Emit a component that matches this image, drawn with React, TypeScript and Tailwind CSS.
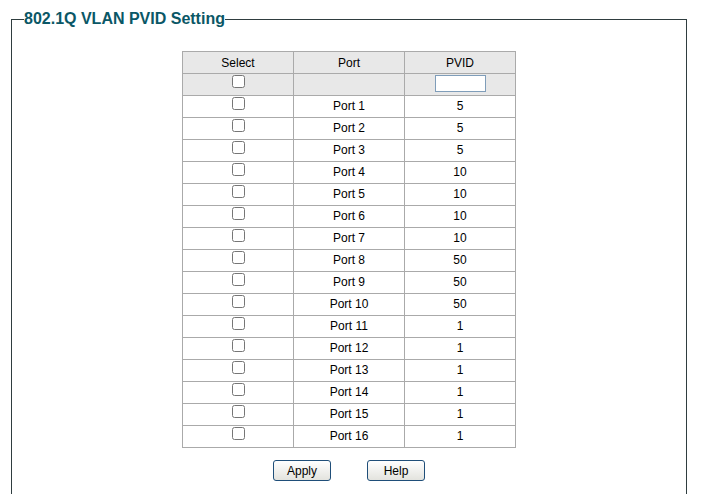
import React from "react";

const ports = [
  { name: "Port 1", pvid: 5 },
  { name: "Port 2", pvid: 5 },
  { name: "Port 3", pvid: 5 },
  { name: "Port 4", pvid: 10 },
  { name: "Port 5", pvid: 10 },
  { name: "Port 6", pvid: 10 },
  { name: "Port 7", pvid: 10 },
  { name: "Port 8", pvid: 50 },
  { name: "Port 9", pvid: 50 },
  { name: "Port 10", pvid: 50 },
  { name: "Port 11", pvid: 1 },
  { name: "Port 12", pvid: 1 },
  { name: "Port 13", pvid: 1 },
  { name: "Port 14", pvid: 1 },
  { name: "Port 15", pvid: 1 },
  { name: "Port 16", pvid: 1 },
];

const Check = () => (
  <input type="checkbox" className="m-0 mt-[1px] h-[13px] w-[13px] align-top" />
);

export default function App() {
  return (
    <div className="h-[494px] w-[712px] overflow-hidden bg-white font-['Liberation_Sans',Arial,sans-serif] text-[12px] text-black">
      <fieldset className="ml-[11px] mt-[10px] h-[600px] w-[676px] border border-[#2f3d3f] px-3 pt-0">
        <legend className="px-0 text-[16px] font-bold leading-[18px] text-[#0a5766]">
          802.1Q VLAN PVID Setting
        </legend>
        <table className="mx-auto mt-[23px] w-[334px] table-fixed border-collapse">
          <thead>
            <tr className="h-[22px] bg-[#e8e8e8]">
              <th className="w-[111px] border border-[#aaaaaa] p-0 font-normal">Select</th>
              <th className="w-[111px] border border-[#aaaaaa] p-0 font-normal">Port</th>
              <th className="w-[111px] border border-[#aaaaaa] p-0 font-normal">PVID</th>
            </tr>
            <tr className="h-[22px] bg-[#e8e8e8]">
              <td className="h-[22px] border border-[#aaaaaa] p-0 text-center align-top">
                <Check />
              </td>
              <td className="border border-[#aaaaaa] p-0" />
              <td className="border border-[#aaaaaa] p-0 text-center align-top">
                <input
                  type="text"
                  className="mt-[1px] h-[17px] w-[51px] border border-[#7f9db9] bg-white px-1 align-top outline-none"
                />
              </td>
            </tr>
          </thead>
          <tbody>
            {ports.map((p) => (
              <tr key={p.name} className="h-[22px]">
                <td className="h-[22px] border border-[#aaaaaa] p-0 text-center align-top">
                  <Check />
                </td>
                <td className="border border-[#aaaaaa] p-0 pb-[1px] text-center">{p.name}</td>
                <td className="border border-[#aaaaaa] p-0 pb-[1px] text-center">{p.pvid}</td>
              </tr>
            ))}
          </tbody>
        </table>
        <div className="mt-[12px] flex justify-center gap-[36px]">
          <button className="h-[21px] w-[58px] rounded-[3px] border border-[#1f4e79] bg-gradient-to-b from-white to-[#e3e3de] text-[12px] text-black">
            Apply
          </button>
          <button className="h-[21px] w-[58px] rounded-[3px] border border-[#1f4e79] bg-gradient-to-b from-white to-[#e3e3de] text-[12px] text-black">
            Help
          </button>
        </div>
      </fieldset>
    </div>
  );
}
